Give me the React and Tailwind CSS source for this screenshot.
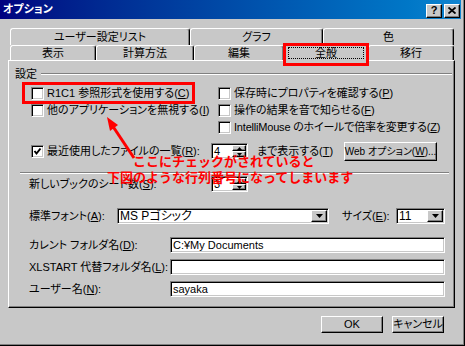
import React from "react";

const raised =
  "bg-[#c8c8c8] border border-t-white border-l-white border-r-black border-b-black shadow-[inset_-1px_-1px_0_#808080]";
const sunken =
  "bg-white border border-t-[#808080] border-l-[#808080] border-r-white border-b-white shadow-[inset_1px_1px_0_#000,inset_-1px_-1px_0_#c8c8c8]";

const Check = ({ checked }) => (
  <span className={`w-[13px] h-[13px] shrink-0 flex items-center justify-center ${sunken}`}>
    {checked && (
      <svg width="9" height="9" viewBox="0 0 9 9">
        <polyline points="1.5,4 3.5,6.5 7.5,1.5" fill="none" stroke="#000" strokeWidth="2" />
      </svg>
    )}
  </span>
);

const Tri = ({ up }) => (
  <svg width="5" height="3" viewBox="0 0 5 3">
    <polygon points={up ? "2.5,0 5,3 0,3" : "0,0 5,0 2.5,3"} fill="#000" />
  </svg>
);

const Spin = ({ value }) => (
  <div className={`w-[37px] h-[16px] flex ${sunken}`}>
    <span className="flex-1 pl-[2px] leading-[14px]">{value}</span>
    <div className="w-[15px] flex flex-col py-[1px] pr-[1px]">
      <div className={`flex-1 flex items-center justify-center ${raised}`}>
        <Tri up />
      </div>
      <div className={`flex-1 flex items-center justify-center ${raised}`}>
        <Tri />
      </div>
    </div>
  </div>
);

const DropBtn = () => (
  <div className={`w-[16px] my-[1px] mr-[1px] flex items-center justify-center ${raised}`}>
    <svg width="7" height="4" viewBox="0 0 7 4">
      <polygon points="0,0 7,0 3.5,4" fill="#000" />
    </svg>
  </div>
);

const Row = ({ children, checked }) => (
  <div className="h-[17px] flex items-center gap-[3px]">
    <Check checked={checked} />
    <span className="whitespace-nowrap">{children}</span>
  </div>
);

const Tab = ({ w, label }) => (
  <div
    className={`${w} h-full flex items-center justify-center bg-[#c8c8c8] border-t border-l border-white border-r border-r-black rounded-t-[3px] shadow-[inset_-1px_0_0_#808080]`}
  >
    {label}
  </div>
);

export default function App() {
  return (
    <div className="w-[465px] h-[346px] relative overflow-hidden bg-[#c8c8c8] border-r border-b border-r-black border-b-black shadow-[inset_-1px_-1px_0_#808080] pr-[3px] flex flex-col text-[11px] text-black [font-family:'Liberation_Sans','Noto_Sans_CJK_JP',sans-serif] [font-feature-settings:'palt']">
      {/* title bar */}
      <div className="h-[19px] shrink-0 flex items-center justify-between pl-[3px] pr-[1px] bg-gradient-to-r from-[#000080] to-[#1084d0]">
        <span className="text-white font-bold text-[11px]">オプション</span>
        <div className="flex gap-[2px] mt-[2px]">
          <div className={`w-[16px] h-[14px] flex items-center justify-center font-bold text-[11px] leading-none ${raised}`}>?</div>
          <div className={`w-[16px] h-[14px] flex items-center justify-center ${raised}`}>
            <svg width="8" height="7" viewBox="0 0 8 7">
              <path d="M0.5 0.5 L7.5 6.5 M7.5 0.5 L0.5 6.5" stroke="#000" strokeWidth="1.8" />
            </svg>
          </div>
        </div>
      </div>

      <div className="pl-[8px] pt-[9px] flex flex-col">
        {/* tabs */}
        <div className="h-[17px] flex pl-[2px]">
          <Tab w="w-[180px]" label="ユーザー設定リスト" />
          <Tab w="w-[133px]" label="グラフ" />
          <Tab w="w-[131px]" label="色" />
        </div>
        <div className="h-[15px] flex items-end pl-[2px]">
          <Tab w="w-[86px]" label="表示" />
          <Tab w="w-[98px]" label="計算方法" />
          <Tab w="w-[90px]" label="編集" />
          <div className="w-[84px] h-[18px] -mb-px relative z-10 p-[3px] pb-[2px] flex bg-[#c8c8c8] border-t border-l border-white border-r border-r-black rounded-t-[3px] shadow-[inset_-1px_0_0_#808080]">
            <div className="flex-1 flex items-center justify-center border border-dotted border-black">全般</div>
          </div>
          <Tab w="w-[86px]" label="移行" />
        </div>

        {/* panel */}
        <div className={`w-[447px] h-[248px] flex flex-col ${raised}`}>
          <div className="mt-[6px] h-[14px] flex items-center pl-[6px] pr-[2px]">
            <span>設定</span>
            <div className="flex-1 ml-[4px] h-[2px] border-t border-t-[#808080] border-b border-b-white" />
          </div>

          <div className="mt-[4px] pl-[22px] flex">
            <div className="w-[187px] flex flex-col">
              <Row>
                R1C1 参照形式を使用する(<u>C</u>)
              </Row>
              <Row>
                他のアプリケーションを無視する(<u>I</u>)
              </Row>
            </div>
            <div className="flex flex-col">
              <Row>
                保存時にプロパティを確認する(<u>P</u>)
              </Row>
              <Row>
                操作の結果を音で知らせる(<u>F</u>)
              </Row>
              <Row>
                <span className="tracking-[-0.2px]">
                  IntelliMouse のホイールで倍率を変更する(<u>Z</u>)
                </span>
              </Row>
            </div>
          </div>

          <div className="mt-[5px] h-[20px] flex items-center pl-[22px] pr-[17px]">
            <div className="w-[180px] flex items-center gap-[3px]">
              <Check checked />
              <span className="whitespace-nowrap">
                最近使用したファイルの一覧(<u>R</u>):
              </span>
            </div>
            <Spin value="4" />
            <span className="ml-[9px] whitespace-nowrap">
              まで表示する(<u>T</u>)
            </span>
            <div className={`ml-auto w-[93px] h-[19px] shrink-0 flex items-center justify-center whitespace-nowrap text-[10px] ${raised}`}>
              Web オプション(<u>W</u>)...
            </div>
          </div>

          <div className="mt-[11px] ml-[11px] mr-[5px] h-[2px] border-t border-t-[#808080] border-b border-b-white" />

          <div className="mt-[2px] h-[16px] flex items-center pl-[20px]">
            <span className="w-[182px]">
              新しいブックのシート数(<u>S</u>):
            </span>
            <Spin value="3" />
          </div>

          <div className="mt-[16px] h-[16px] flex items-center pl-[20px]">
            <span className="w-[88px]">
              標準フォント(<u>A</u>):
            </span>
            <div className={`w-[212px] h-full flex ${sunken}`}>
              <span className="flex-1 pl-[2px] leading-[14px] text-[12px]">MS Pゴシック</span>
              <DropBtn />
            </div>
            <span className="ml-[13px] w-[54px]">
              サイズ(<u>E</u>):
            </span>
            <div className={`w-[49px] h-full flex ${sunken}`}>
              <span className="flex-1 pl-[2px] leading-[14px] text-[12px]">11</span>
              <DropBtn />
            </div>
          </div>

          <div className="mt-[13px] h-[16px] flex items-center pl-[20px]">
            <span className="w-[141px]">
              カレント フォルダ名(<u>D</u>):
            </span>
            <div className={`w-[275px] h-full pl-[2px] leading-[14px] ${sunken}`}>C:¥My Documents</div>
          </div>
          <div className="mt-[6px] h-[16px] flex items-center pl-[20px]">
            <span className="w-[141px]">
              XLSTART 代替フォルダ名(<u>L</u>):
            </span>
            <div className={`w-[275px] h-full ${sunken}`} />
          </div>
          <div className="mt-[6px] h-[16px] flex items-center pl-[20px]">
            <span className="w-[141px]">
              ユーザー名(<u>N</u>):
            </span>
            <div className={`w-[275px] h-full pl-[2px] leading-[14px] ${sunken}`}>sayaka</div>
          </div>
        </div>

        <div className="mt-[8px] flex justify-end gap-[9px] pr-[17px]">
          <div className={`w-[62px] h-[17px] flex items-center justify-center ${raised}`}>OK</div>
          <div className={`w-[52px] h-[17px] flex items-center justify-center ${raised}`}>キャンセル</div>
        </div>
      </div>

      {/* annotations */}
      <div className="absolute left-[22px] top-[82px] w-[173px] h-[22px] border-[3px] border-[#ff0000] pointer-events-none" />
      <div className="absolute left-[283px] top-[43px] w-[86px] h-[23px] border-[3px] border-[#ff0000] z-20 pointer-events-none" />
      <svg className="absolute left-0 top-0 pointer-events-none" width="465" height="346" viewBox="0 0 465 346">
        <line x1="134" y1="158" x2="112" y2="125" stroke="#ff0000" strokeWidth="3" />
        <polygon points="107,117 118,125 110,131" fill="#ff0000" />
      </svg>
      <div className="absolute left-[133px] top-[153px] text-[13px] leading-[16px] font-bold text-[#ff0000] [font-family:'Noto_Sans_CJK_JP',sans-serif] [font-feature-settings:normal] whitespace-nowrap">
        ここにチェックがされていると
      </div>
      <div className="absolute left-[107px] top-[169px] text-[13px] leading-[16px] font-bold text-[#ff0000] [font-family:'Noto_Sans_CJK_JP',sans-serif] [font-feature-settings:normal] whitespace-nowrap">
        下図のような行列番号になってしまいます
      </div>
    </div>
  );
}
